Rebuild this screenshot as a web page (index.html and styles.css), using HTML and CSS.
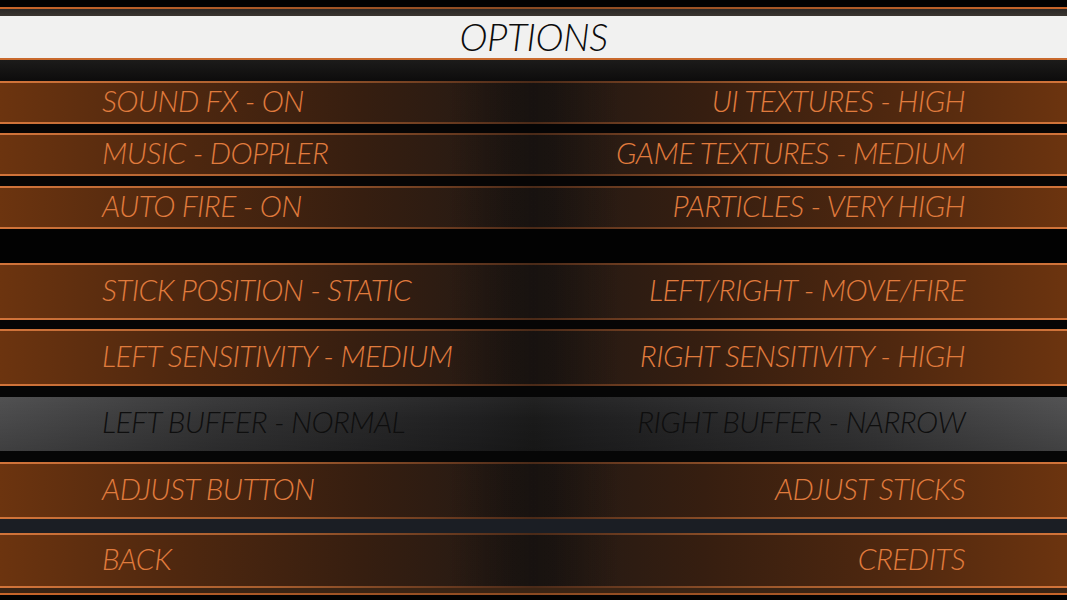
FILE: index.html
```html
<!DOCTYPE html>
<html>
<head>
<meta charset="utf-8">
<link rel="stylesheet" href="styles.css">
</head>
<body>
<div class="screen">
  <div class="topblack"></div>
  <div class="hline"></div>
  <div class="topband"></div>
  <div class="header"><span class="title">OPTIONS</span></div>
  <div class="hline thick"></div>
  <div class="gap g-head"></div>

  <div class="row r-sm"><span class="opt">SOUND FX - ON</span><span class="opt">UI TEXTURES - HIGH</span></div>
  <div class="gap g-9"></div>
  <div class="row r-sm"><span class="opt">MUSIC - DOPPLER</span><span class="opt">GAME TEXTURES - MEDIUM</span></div>
  <div class="gap g-10"></div>
  <div class="row r-sm"><span class="opt">AUTO FIRE - ON</span><span class="opt">PARTICLES - VERY HIGH</span></div>
  <div class="gap g-black"></div>
  <div class="row r-lg"><span class="opt">STICK POSITION - STATIC</span><span class="opt">LEFT/RIGHT - MOVE/FIRE</span></div>
  <div class="gap g-9"></div>
  <div class="row r-lg"><span class="opt">LEFT SENSITIVITY - MEDIUM</span><span class="opt">RIGHT SENSITIVITY - HIGH</span></div>
  <div class="gap g-11"></div>
  <div class="row r-sel"><span class="opt">LEFT BUFFER - NORMAL</span><span class="opt">RIGHT BUFFER - NARROW</span></div>
  <div class="gap g-11"></div>
  <div class="row r-lg"><span class="opt">ADJUST BUTTON</span><span class="opt">ADJUST STICKS</span></div>
  <div class="gap g-grey"></div>
  <div class="row r-lg r-last"><span class="opt">BACK</span><span class="opt">CREDITS</span></div>
  <div class="bottomband"></div>
  <div class="hline"></div>
  <div class="bottomblack"></div>
</div>
</body>
</html>
```

FILE: styles.css
```css
html, body {
  margin: 0;
  padding: 0;
  background: #030303;
}

.screen {
  width: 1067px;
  height: 600px;
  overflow: hidden;
  display: flex;
  flex-direction: column;
  font-family: "Lato", "Liberation Sans", sans-serif;
  background: linear-gradient(to bottom, #060606 0%, #0a0a0c 60%, #15171b 100%);
}

.topblack {
  height: 7px;
  background: #020202;
}

.hline {
  height: 2px;
  flex: none;
  background: linear-gradient(to right, #c9662a 0%, #8a4a22 50%, #c9662a 100%);
}

.hline.thick {
  height: 2px;
  background: #c8692c;
}

.topband {
  height: 7px;
  background: linear-gradient(to bottom, #2a2826 0%, #3a3530 100%);
}

.header {
  height: 42px;
  flex: none;
  background: #f1f1f0;
  display: flex;
  align-items: center;
  justify-content: center;
}

.title {
  font-style: italic;
  font-weight: 300;
  font-size: 38px;
  color: #0c0c0c;
  letter-spacing: -0.5px;
  line-height: 1;
  margin-bottom: 3px;
}

.gap { flex: none; }
.g-head {
  height: 21px;
  background: linear-gradient(to bottom, #1c1b1a 0%, #0d0c0c 100%);
}
.g-9 { height: 9px; background: #060505; }
.g-10 { height: 10px; background: #060505; }
.g-11 { height: 11px; background: #060606; }
.g-black { height: 34px; background: #020202; }
.g-grey { height: 14px; background: #1b1e24; }

.row {
  flex: none;
  display: flex;
  align-items: center;
  justify-content: space-between;
  padding: 0 102px;
  border-style: solid;
  border-width: 2px 0;
  border-image: linear-gradient(to right, #d2743a 0%, #a85e2e 25%, #5a321c 46%, #4a2a18 50%, #5a321c 54%, #a85e2e 75%, #d2743a 100%) 1;
  background:
    linear-gradient(to right, rgba(0,0,0,0) 42%, rgba(6,6,6,0.3) 48%, rgba(6,6,6,0.35) 50%, rgba(6,6,6,0.3) 52%, rgba(0,0,0,0) 58%),
    linear-gradient(to right, #6c340f 0%, #50280f 16%, #361e10 34%, #211915 50%, #361e10 66%, #50280f 84%, #6c340f 100%);
}

.r-sm { height: 39px; }
.r-lg { height: 53px; }
.r-last { height: 51px; }

.opt {
  font-style: italic;
  font-weight: 300;
  font-size: 30px;
  color: #e07b3d;
  letter-spacing: -0.6px;
  line-height: 1;
  white-space: nowrap;
  margin-bottom: 6px;
}

.r-sel {
  height: 54px;
  border: none;
  background:
    linear-gradient(to bottom, rgba(255,255,255,0.04) 0%, rgba(0,0,0,0) 40%, rgba(0,0,0,0.15) 100%),
    linear-gradient(to right, #4a4a4b 0%, #333334 20%, #1f1f20 45%, #1a1a1a 50%, #1f1f20 55%, #333334 80%, #4c4c4d 100%);
}

.r-sel .opt {
  color: #0e0e0e;
}

.bottomband {
  height: 5px;
  flex: none;
  background: #3a2414;
}

.bottomblack {
  flex: 1;
  background: #020202;
}
```
